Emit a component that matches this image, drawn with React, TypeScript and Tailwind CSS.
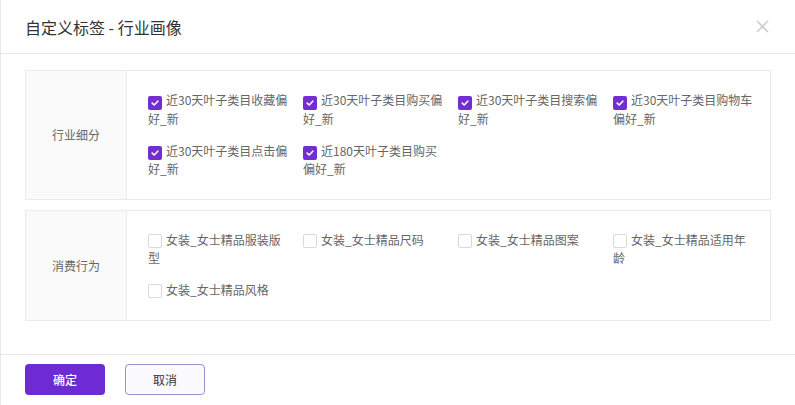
import React from "react";

type Tag = { lines: string[]; checked: boolean };

// lines split the same way the reference wraps them
const industryTags: Tag[] = [
  { lines: ["近30天叶子类目收藏偏", "好_新"], checked: true },
  { lines: ["近30天叶子类目购买偏", "好_新"], checked: true },
  { lines: ["近30天叶子类目搜索偏", "好_新"], checked: true },
  { lines: ["近30天叶子类目购物车", "偏好_新"], checked: true },
  { lines: ["近30天叶子类目点击偏", "好_新"], checked: true },
  { lines: ["近180天叶子类目购买", "偏好_新"], checked: true },
];

const consumeTags: Tag[] = [
  { lines: ["女装_女士精品服装版", "型"], checked: false },
  { lines: ["女装_女士精品尺码"], checked: false },
  { lines: ["女装_女士精品图案"], checked: false },
  { lines: ["女装_女士精品适用年", "龄"], checked: false },
  { lines: ["女装_女士精品风格"], checked: false },
];

function Box({ checked }: { checked: boolean }) {
  if (checked) {
    return (
      <span className="inline-flex items-center justify-center w-[14px] h-[14px] rounded-[2px] bg-[#722ed1] mr-[4px] align-[-2.5px]">
        <svg width="10" height="10" viewBox="0 0 10 10">
          <path d="M2.2 5.1 L4.2 7 L7.8 3.2" fill="none" stroke="white" strokeWidth="1.6" strokeLinecap="round" strokeLinejoin="round" />
        </svg>
      </span>
    );
  }
  return <span className="inline-block w-[14px] h-[14px] rounded-[2px] border border-[#d9d9d9] bg-white mr-[4px] align-[-2.5px]" />;
}

function Section({ title, tags }: { title: string; tags: Tag[] }) {
  return (
    <div className="flex border border-[#ebebeb]">
      <div className="w-[101px] shrink-0 bg-[#fafafa] border-r border-[#ebebeb] flex items-center justify-center text-[12px] text-[#666]">
        {title}
      </div>
      <div className="flex-1 pl-[21px] pt-[20px] pb-[21px] grid grid-cols-[repeat(4,155px)] gap-y-[14px] content-start">
        {tags.map((t) => (
          <div key={t.lines.join("")} className="text-[12px] leading-[18px] text-[#666] whitespace-nowrap">
            <Box checked={t.checked} />
            {t.lines.map((l, i) => (
              <React.Fragment key={i}>
                {i > 0 && <br />}
                {l}
              </React.Fragment>
            ))}
          </div>
        ))}
      </div>
    </div>
  );
}

export default function App() {
  return (
    <div
      className="w-[795px] h-[405px] bg-white flex flex-col border-l border-[#e8e8e8]"
      style={{ fontFamily: '"Noto Sans CJK SC", "Noto Sans", sans-serif' }}
    >
      {/* Header */}
      <div className="h-[54px] shrink-0 flex items-center justify-between pl-[24px] pr-[26px] border-b border-[#e8e8e8]">
        <span className="text-[16px] text-[#333]">自定义标签 - 行业画像</span>
        <svg width="13" height="13" viewBox="0 0 13 13">
          <path d="M1 1 L12 12 M12 1 L1 12" stroke="#c8c8c8" strokeWidth="1.4" />
        </svg>
      </div>

      {/* Body */}
      <div className="flex-1 px-[24px] pt-[16px] flex flex-col gap-[10px]">
        <Section title="行业细分" tags={industryTags} />
        <Section title="消费行为" tags={consumeTags} />
      </div>

      {/* Footer */}
      <div className="h-[51px] shrink-0 border-t border-[#e8e8e8] flex items-center gap-[20px] pl-[24px] pb-[1px]">
        <button className="w-[80px] h-[31px] rounded-[4px] bg-[#6c2bd3] text-white text-[12px] font-medium">确定</button>
        <button className="w-[80px] h-[31px] rounded-[4px] border border-[#a58bcf] bg-[#fbfaff] text-[#333] text-[12px]">取消</button>
      </div>
    </div>
  );
}
